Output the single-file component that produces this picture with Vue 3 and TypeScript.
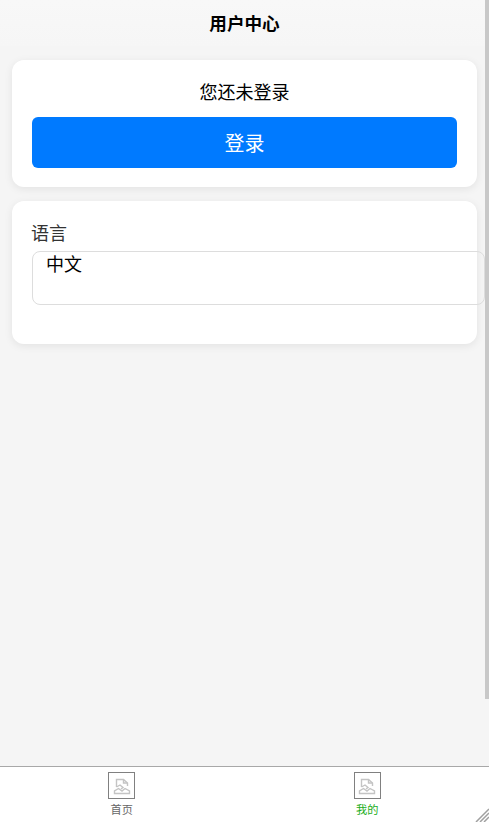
<script setup lang="ts">
const tabs = [
  { label: '首页', active: false },
  { label: '我的', active: true },
]
</script>

<template>
  <div class="page">
    <div class="scroll-thumb" />
    <header class="title">用户中心</header>
    <main class="content">
      <section class="card login-card">
        <p class="login-hint">您还未登录</p>
        <button class="login-btn" type="button">登录</button>
      </section>
      <section class="card lang-card">
        <div class="lang-label">语言</div>
        <div class="lang-select">中文</div>
      </section>
    </main>
    <nav class="tabbar">
      <div v-for="tab in tabs" :key="tab.label" class="tab" :class="{ active: tab.active }">
        <span class="tab-icon">
          <svg width="18" height="18" viewBox="0 0 18 18" fill="none" stroke="#c4c4c4" stroke-width="1.4">
            <path d="M3.5 10V2.5H10.5L14.5 6V9" />
            <path d="M10.5 2.5V6H14.5" />
            <path d="M3.5 10L7 8L10 10.5L8 12" />
            <path d="M1.5 16.5V14L5.5 11.5L9 14L12 11.5L16.5 14V16.5H1.5Z" />
          </svg>
        </span>
        <span class="tab-label">{{ tab.label }}</span>
      </div>
    </nav>
    <svg class="resize-grip" width="14" height="14" viewBox="0 0 14 14" stroke="#a0a0a0" stroke-width="1.5">
      <path d="M1 14L14 1M5 14L14 5M9 14L14 9" />
    </svg>
  </div>
</template>

<style>
html,
body {
  margin: 0;
  overflow: hidden;
}
</style>

<style scoped>
.page {
  position: relative;
  display: flex;
  flex-direction: column;
  width: 489px;
  height: 822px;
  overflow: hidden;
  background: #f5f5f5;
  font-family: "Liberation Sans", "Noto Sans CJK SC", sans-serif;
  color: #000;
}

.scroll-thumb {
  position: absolute;
  top: 0;
  right: 0;
  width: 4px;
  height: 699px;
  background: #c8c8c8;
}

.title {
  flex: none;
  height: 46px;
  padding-top: 1px;
  box-sizing: border-box;
  line-height: 46px;
  text-align: center;
  font-size: 17.6px;
  font-weight: 700;
  background: linear-gradient(#f8f8f8, #f6f6f6);
}

.content {
  flex: 1;
  display: flex;
  flex-direction: column;
  gap: 14px;
  padding: 14px 12px 0;
}

.card {
  box-sizing: border-box;
  background: #fff;
  border-radius: 12px;
  box-shadow: 0 2px 8px rgba(0, 0, 0, 0.08);
}

.login-card {
  height: 127px;
  padding: 20px;
}

.login-hint {
  margin: 0 0 12px;
  height: 25px;
  line-height: 27px;
  text-align: center;
  font-size: 18px;
}

.login-btn {
  display: block;
  width: 100%;
  height: 51px;
  border: 0;
  border-radius: 6px;
  background: #007aff;
  color: #fff;
  font-family: inherit;
  font-size: 20px;
}

.lang-card {
  height: 143px;
  padding: 20px;
}

.lang-label {
  height: 30px;
  margin-left: -1px;
  line-height: 26px;
  font-size: 18px;
  color: #333;
}

.lang-select {
  box-sizing: border-box;
  width: 453px;
  height: 54px;
  padding: 0 13px;
  border: 1px solid #ddd;
  border-radius: 8px;
  line-height: 26px;
  font-size: 18px;
}

.tabbar {
  flex: none;
  display: flex;
  justify-content: space-around;
  box-sizing: border-box;
  height: 56px;
  border-top: 1px solid #a8a8a8;
  background: #fff;
}

.tab {
  display: flex;
  flex-direction: column;
  align-items: center;
  width: 245px;
  padding-top: 5px;
  color: #666;
}

.tab:first-child {
  margin-left: -1px;
}

.tab:last-child {
  margin-right: -1px;
}

.tab.active {
  color: #1aad19;
}

.tab-icon {
  box-sizing: border-box;
  display: flex;
  align-items: center;
  justify-content: center;
  width: 27px;
  height: 27px;
  border: 1px solid #808080;
}

.tab-label {
  margin-top: 4px;
  line-height: 14px;
  font-size: 11.2px;
}

.resize-grip {
  position: absolute;
  right: 0;
  bottom: 0;
}
</style>
